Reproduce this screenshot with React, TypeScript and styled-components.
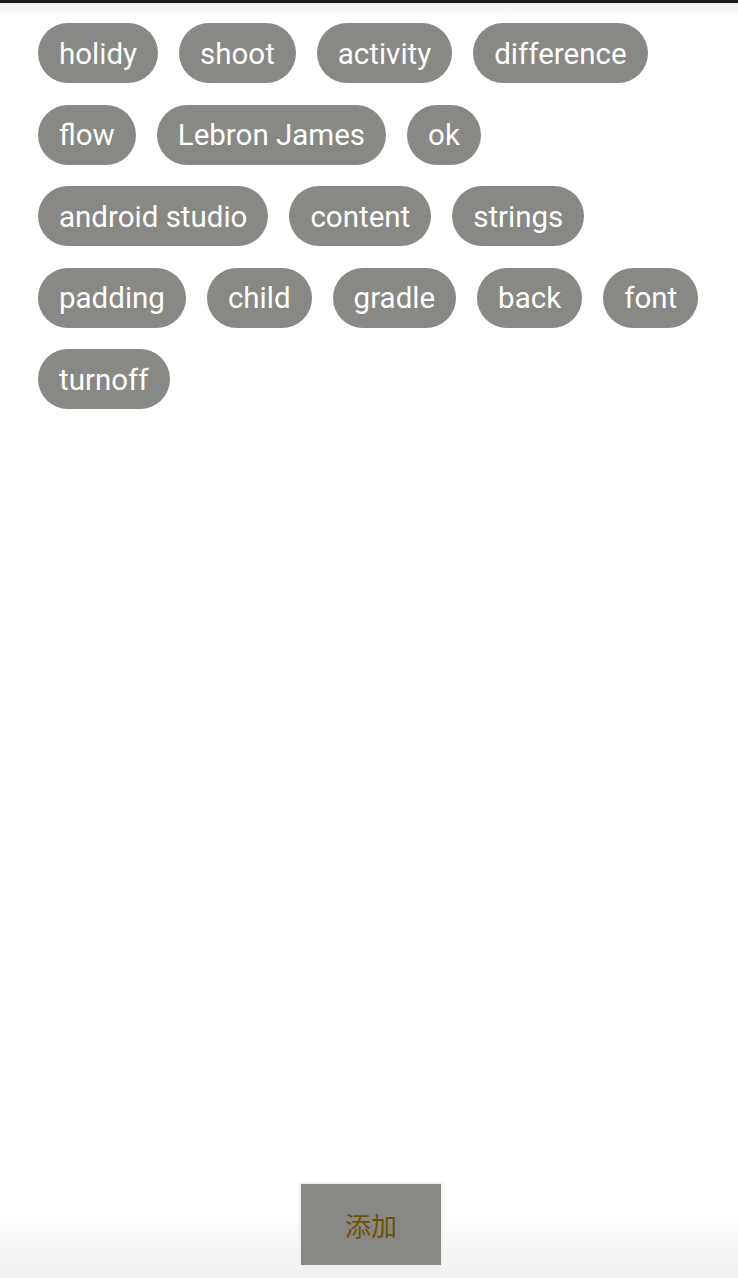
import React from "react";
import styled, { createGlobalStyle } from "styled-components";

const Global = createGlobalStyle`
  html, body { margin: 0; padding: 0; background: #ffffff; }
  body { font-family: Roboto, "Noto Sans", sans-serif; }
`;

const Page = styled.div`
  display: flex;
  flex-direction: column;
  min-height: 100vh;
  box-sizing: border-box;
  border-top: 3px solid #1a1a1a;
  background: linear-gradient(#f0f0f0 0px, #ffffff 14px);
`;

const TagFlow = styled.div`
  display: flex;
  flex-wrap: wrap;
  gap: 21.5px 21px;
  padding: 20px 30px 0 38px;
`;

const Tag = styled.span`
  display: inline-flex;
  align-items: center;
  box-sizing: border-box;
  height: 60px;
  padding: 3px 21px 0;
  border-radius: 30px;
  background: #888884;
  color: #ffffff;
  font-family: Roboto, sans-serif;
  font-size: 29.5px;
  line-height: 1;
`;

const Footer = styled.div`
  margin-top: auto;
  display: flex;
  justify-content: center;
  padding: 0 0 11px 4px;
  background: linear-gradient(#ffffff 0%, #ffffff 30%, #efefef 100%);
`;

const AddButton = styled.button`
  width: 144px;
  height: 85px;
  box-sizing: border-box;
  border: 2px solid #f3f1e8;
  background: #888884;
  color: #6f5200;
  font-family: "Noto Sans CJK SC", sans-serif;
  font-size: 26px;
  padding: 0;
  cursor: pointer;
`;

const tags = [
  "holidy", "shoot", "activity", "difference",
  "flow", "Lebron James", "ok",
  "android studio", "content", "strings",
  "padding", "child", "gradle", "back", "font",
  "turnoff",
];

export default function App() {
  return (
    <>
      <Global />
      <Page>
        <TagFlow>
          {tags.map((t) => (
            <Tag key={t}>{t}</Tag>
          ))}
        </TagFlow>
        <Footer>
          <AddButton>添加</AddButton>
        </Footer>
      </Page>
    </>
  );
}
